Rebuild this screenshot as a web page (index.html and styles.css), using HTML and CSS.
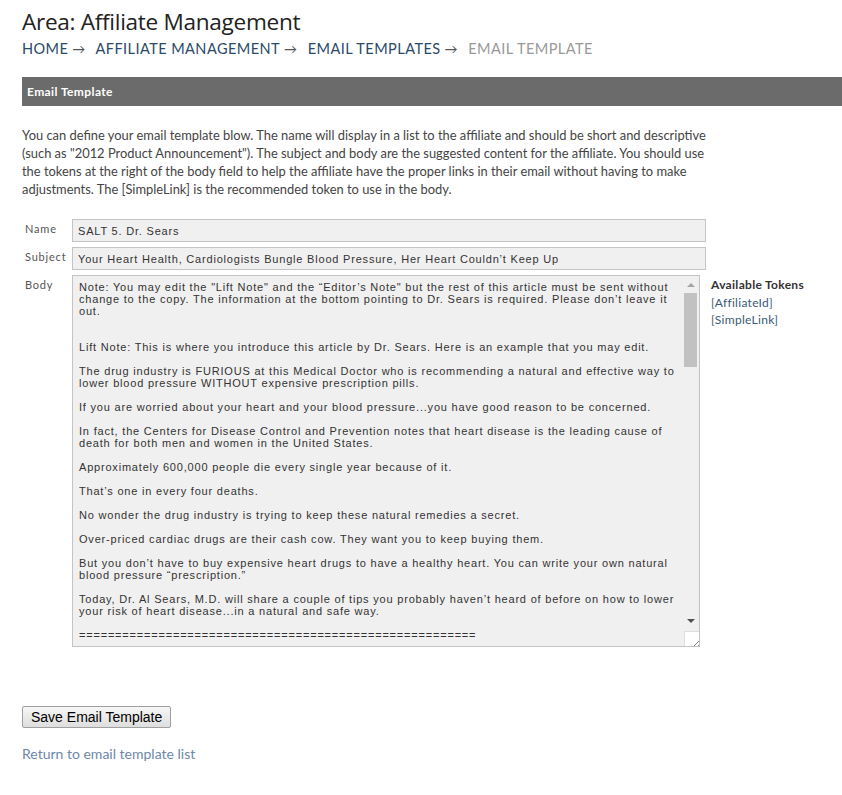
FILE: index.html
```html
<!DOCTYPE html>
<html lang="en">
<head>
    <meta charset="UTF-8">
    <title>Email Template</title>
    <link rel="stylesheet" href="styles.css">
</head>
<body>
    <h1 class="area-title">Area: Affiliate Management</h1>
    <div class="breadcrumb">
        <a href="#">HOME</a><span class="arrow">&rarr;</span>
        <a href="#">AFFILIATE MANAGEMENT</a><span class="arrow">&rarr;</span>
        <a href="#">EMAIL TEMPLATES</a><span class="arrow">&rarr;</span>
        <span class="current">EMAIL TEMPLATE</span>
    </div>

    <div class="panel-head">Email Template</div>

    <p class="intro">You can define your email template blow. The name will display in a list to the affiliate and should be short and descriptive (such as "2012 Product Announcement"). The subject and body are the suggested content for the affiliate. You should use the tokens at the right of the body field to help the affiliate have the proper links in their email without having to make adjustments. The [SimpleLink] is the recommended token to use in the body.</p>

    <form class="template-form">
        <div class="row">
            <label>Name</label>
            <input type="text" class="field" value="SALT 5. Dr. Sears">
        </div>
        <div class="row">
            <label>Subject</label>
            <input type="text" class="field" value="Your Heart Health, Cardiologists Bungle Blood Pressure, Her Heart Couldn’t Keep Up">
        </div>
        <div class="row">
            <label>Body</label>
            <div class="body-wrap">
            <textarea class="body-field">Note: You may edit the "Lift Note" and the “Editor’s Note" but the rest of this article must be sent without change to the copy. The information at the bottom pointing to Dr. Sears is required. Please don’t leave it out.


Lift Note: This is where you introduce this article by Dr. Sears. Here is an example that you may edit.

The drug industry is FURIOUS at this Medical Doctor who is recommending a natural and effective way to lower blood pressure WITHOUT expensive prescription pills.

If you are worried about your heart and your blood pressure...you have good reason to be concerned.

In fact, the Centers for Disease Control and Prevention notes that heart disease is the leading cause of death for both men and women in the United States.

Approximately 600,000 people die every single year because of it.

That’s one in every four deaths.

No wonder the drug industry is trying to keep these natural remedies a secret.

Over-priced cardiac drugs are their cash cow. They want you to keep buying them.

But you don’t have to buy expensive heart drugs to have a healthy heart. You can write your own natural blood pressure “prescription.”

Today, Dr. Al Sears, M.D. will share a couple of tips you probably haven’t heard of before on how to lower your risk of heart disease...in a natural and safe way.

=======================================================

Editor’s Note: You can change this note to fit your own audience.

Your Heart Health
Cardiologists Bungle Blood Pressure, Her Heart Couldn’t Keep Up

By Al Sears, M.D.

A patient of mine came to see me after her cardiologist put her on three different blood pressure drugs.

She was tired all the time. She was dizzy when she stood up. And her numbers still weren’t where they should be.

Her heart simply couldn’t keep up with the medications that were supposed to be helping it.

To learn more about Dr. Sears and his approach to heart health, visit:

[SimpleLink]</textarea>
                <div class="scrollbar">
                    <span class="sb-btn up"></span>
                    <span class="sb-thumb"></span>
                    <span class="sb-track"></span>
                    <span class="sb-btn down"></span>
                </div>
            </div>
            <div class="tokens">
                <h4>Available Tokens</h4>
                <a href="#">[AffiliateId]</a>
                <a href="#">[SimpleLink]</a>
            </div>
        </div>
        <button type="button" class="save-btn">Save Email Template</button>
    </form>

    <a href="#" class="back-link">Return to email template list</a>
</body>
</html>
```

FILE: styles.css
```css
body {
    margin: 0;
    padding: 8px 0 0 22px;
    font-family: 'Lato', sans-serif;
    color: #333;
    background: #fff;
}
a {
    text-decoration: none;
}
.area-title {
    margin: 0;
    font-family: 'Open Sans', sans-serif;
    font-size: 22.6px;
    font-weight: 400;
    line-height: 28px;
    color: #222;
    letter-spacing: -0.3px;
}
.breadcrumb {
    margin-top: 4px;
    font-size: 14.5px;
    line-height: 18px;
    letter-spacing: 0.45px;
}
.breadcrumb a {
    color: #2a4a68;
}
.breadcrumb .arrow {
    color: #555;
    margin: 0 6px 0 4px;
    font-size: 13px;
}
.breadcrumb .current {
    color: #999;
}
.panel-head {
    margin-top: 19px;
    height: 29px;
    line-height: 29px;
    padding-left: 5px;
    background-color: #6b6b6b;
    color: #fff;
    font-size: 12px;
    font-weight: bold;
    letter-spacing: 0.4px;
}
.intro {
    margin: 20px 0 0;
    max-width: 690px;
    font-size: 12.9px;
    line-height: 18px;
    color: #444;
}
.template-form {
    margin-top: 21px;
}
.row {
    display: flex;
    align-items: flex-start;
    margin-bottom: 5px;
}
.row label {
    width: 47px;
    padding: 3px 0 0 3px;
    font-size: 11px;
    letter-spacing: 0.8px;
    color: #555;
}
.field {
    width: 634px;
    height: 23px;
    box-sizing: border-box;
    margin: 0;
    padding: 0 5px;
    border: 1px solid #c4c4c4;
    background-color: #f0f0f0;
    font-family: 'Liberation Sans', Arial, sans-serif;
    font-size: 11px;
    letter-spacing: 0.8px;
    color: #333;
}
.body-wrap {
    position: relative;
    width: 628px;
    height: 372px;
}
.body-field {
    display: block;
    width: 628px;
    height: 372px;
    box-sizing: border-box;
    margin: 0;
    padding: 5px 23px 4px 6px;
    border: 1px solid #c4c4c4;
    background-color: #f0f0f0;
    font-family: 'Liberation Sans', Arial, sans-serif;
    font-size: 11px;
    line-height: 12px;
    letter-spacing: 0.8px;
    color: #333;
    overflow-y: scroll;
    resize: both;
}
.body-field::-webkit-resizer {
    background: #fff url("data:image/svg+xml;utf8,<svg xmlns='http://www.w3.org/2000/svg' width='17' height='17'><path d='M15 8L8 15M15 12L12 15' stroke='%23888' stroke-width='1'/></svg>") no-repeat;
    border-left: 1px solid #ddd;
    border-top: 1px solid #ddd;
}
.scrollbar {
    position: absolute;
    top: 1px;
    right: 1px;
    width: 17px;
    height: 353px;
    display: flex;
    flex-direction: column;
    align-items: center;
    background: #f0f0f0;
    pointer-events: none;
}
.sb-btn {
    width: 17px;
    height: 17px;
    display: flex;
    align-items: center;
    justify-content: center;
}
.sb-btn::before {
    content: "";
    border-left: 4px solid transparent;
    border-right: 4px solid transparent;
}
.sb-btn.up::before {
    border-bottom: 4px solid #a3a3a3;
}
.sb-btn.down::before {
    border-top: 4px solid #505050;
}
.sb-thumb {
    width: 13px;
    height: 74px;
    background: #c1c1c1;
}
.sb-track {
    flex: 1;
}
.tokens {
    margin-left: 11px;
    padding-top: 1px;
    font-size: 12px;
    line-height: 17.5px;
}
.tokens h4 {
    margin: 0;
    font-size: 12px;
    font-weight: bold;
    letter-spacing: 0.3px;
    color: #333;
}
.tokens a {
    display: block;
    color: #3a5a78;
    letter-spacing: 0.3px;
}
.save-btn {
    margin-top: 54px;
    padding: 2px 8px;
    font-family: 'Liberation Sans', Arial, sans-serif;
    font-size: 14px;
    color: #000;
    background: linear-gradient(#f6f6f6, #dedede);
    border: 1px solid #a0a0a0;
    border-radius: 2px;
}
.back-link {
    display: block;
    margin-top: 17px;
    font-size: 14px;
    color: #6c88a8;
}
```
